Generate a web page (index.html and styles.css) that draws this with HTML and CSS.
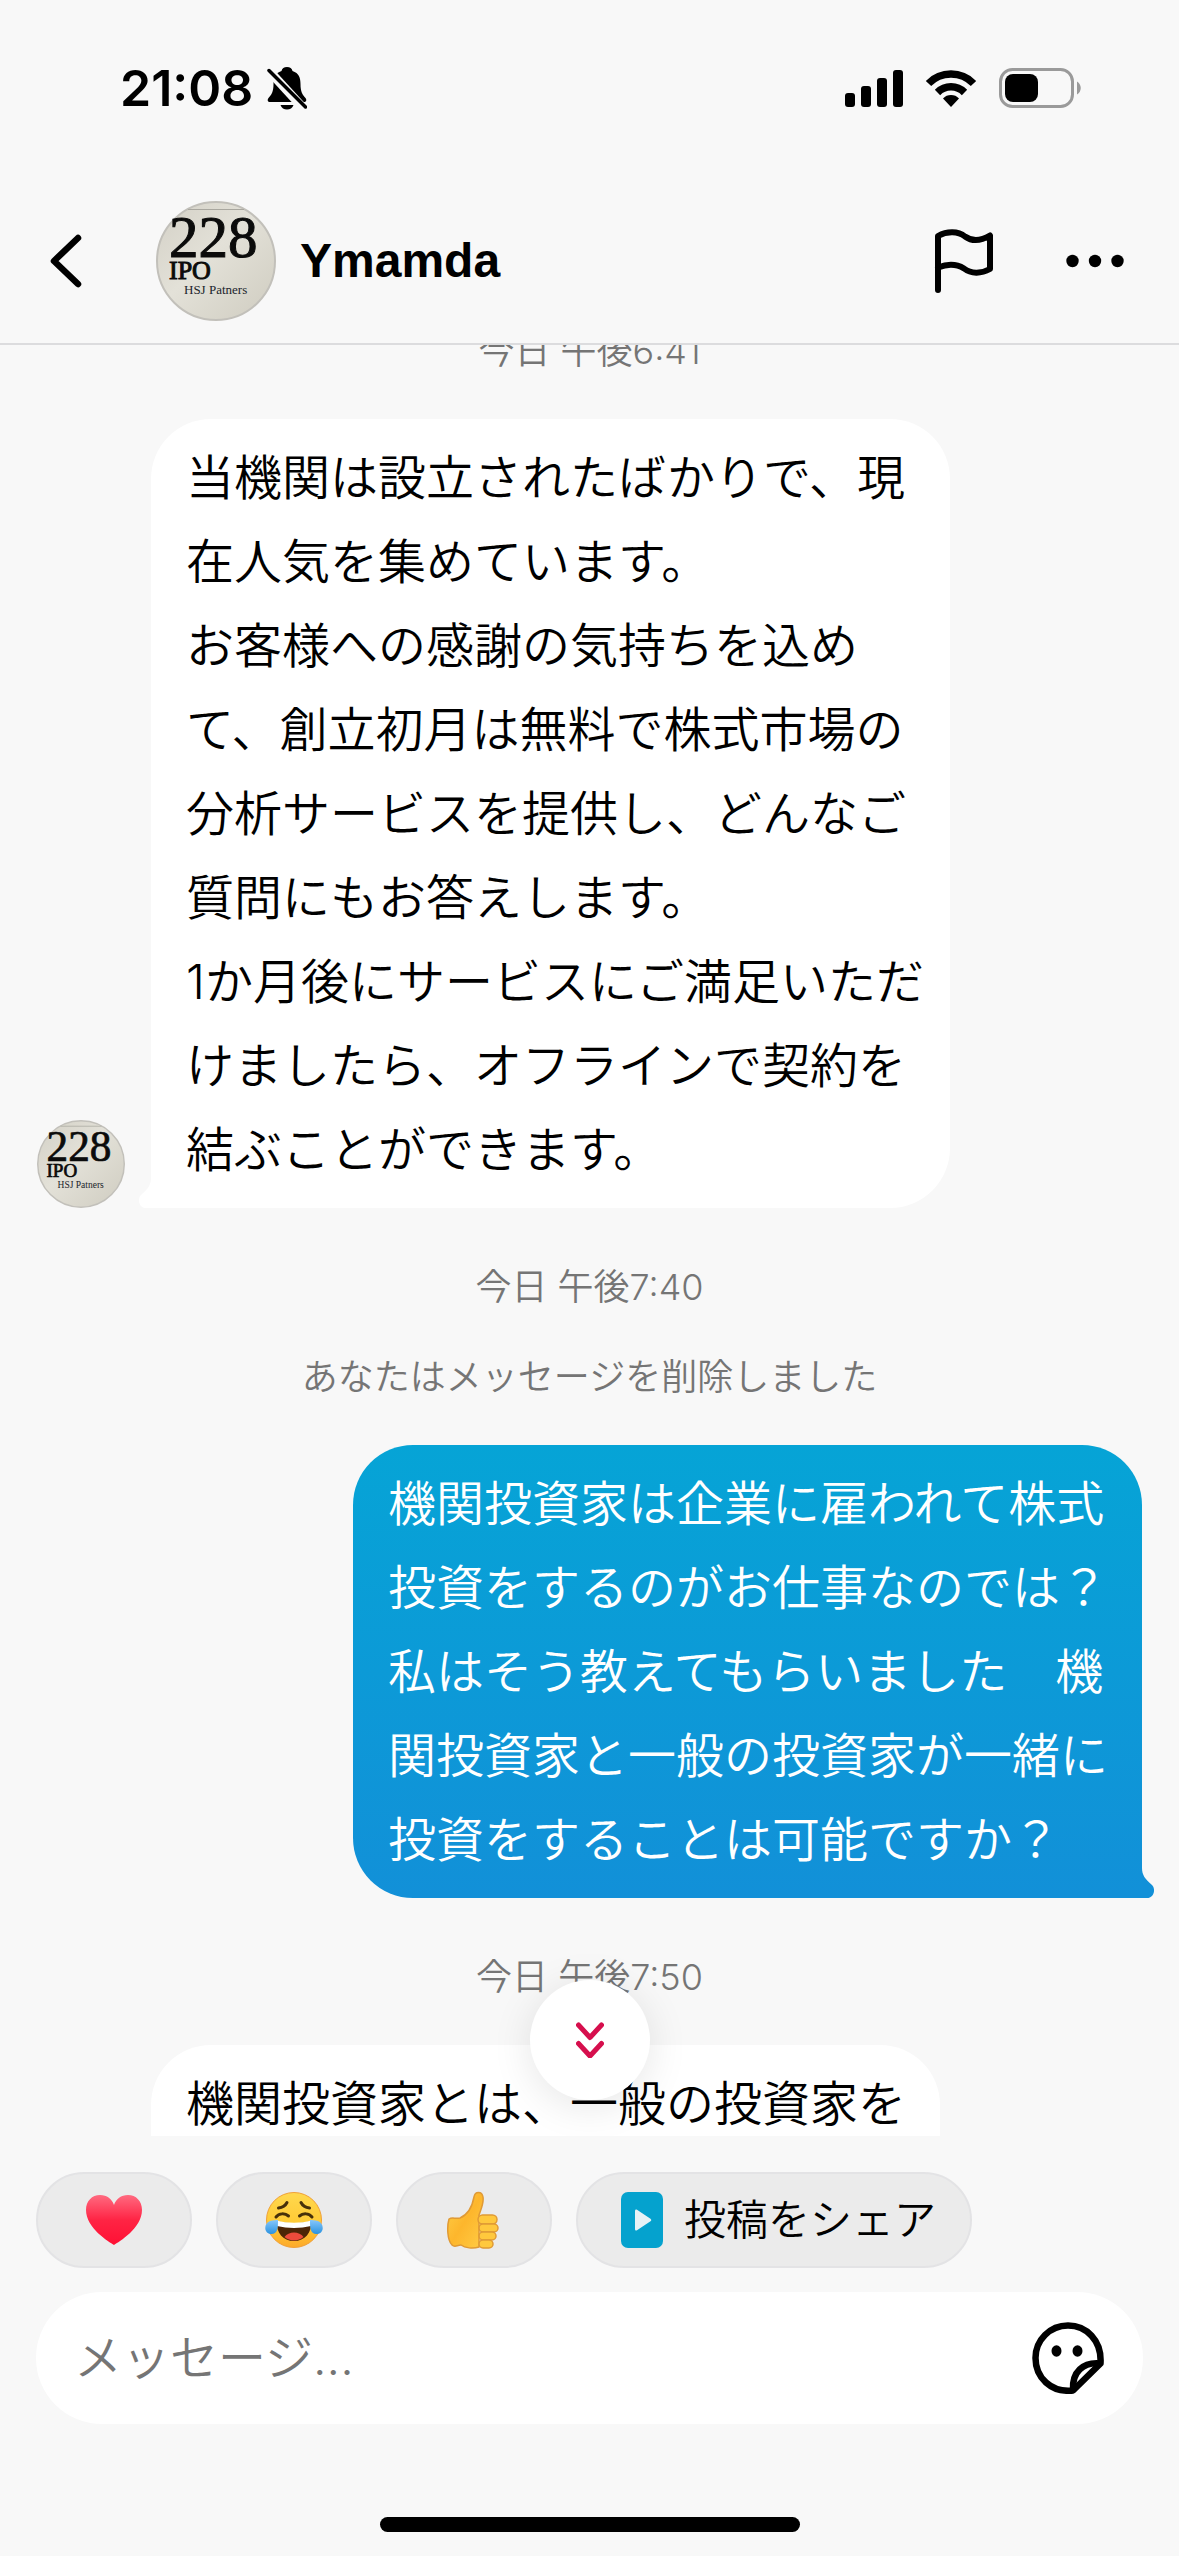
FILE: index.html
```html
<!DOCTYPE html>
<html lang="ja">
<head>
<meta charset="utf-8">
<meta name="viewport" content="width=device-width">
<title>Ymamda</title>
<link rel="stylesheet" href="styles.css">
</head>
<body>
<svg class="defs" aria-hidden="true">
  <defs>
    <linearGradient id="paper" x1="0" y1="0" x2="1" y2="1">
      <stop offset="0" stop-color="#d3d0c6"/><stop offset="0.45" stop-color="#e3e1d8"/><stop offset="1" stop-color="#cfccc0"/>
    </linearGradient>
    <symbol id="avatar" viewBox="0 0 120 120">
      <circle cx="60" cy="60" r="59" fill="url(#paper)" stroke="#c2c0ba" stroke-width="2"/>
      <path d="M32 8.500H88" stroke="#a9a79f"/>
      <g font-family="Liberation Serif, serif" fill="#0b0b0b">
        <text x="13" y="56" font-size="59" stroke="#0b0b0b">228</text>
        <text x="13" y="78" font-size="26" stroke="#0b0b0b">IPO</text>
        <text x="28" y="93" font-size="13" fill="#20242c">HSJ Patners</text>
      </g>
    </symbol>
  </defs>
</svg>
<div class="app">
  <div class="status">
    <div class="status-left">
      <span class="clock">21:08</span>
      <svg width="40" height="44" viewBox="0 0 40 44" aria-hidden="true">
        <path d="M20 1c-3 0-5 1.500-5.500 4C8 7 6.500 12 6.500 18c0 8-2 10.500-5 14-1.500 2-.8 4 1.500 4h34c2.300 0 3-2 1.500-4-3-3.500-5-6-5-14 0-6-1.500-11-8-13C25 2.500 23 1 20 1zM13.500 39h13c-1 3.300-3.500 4.500-6.500 4.500s-5.500-1.200-6.500-4.500z"/>
        <path d="M-1 1.500 39 45" stroke="#f8f8f8" stroke-width="9"/>
        <path d="M2 4.500 38.500 41" stroke="#000" stroke-width="3.500" stroke-linecap="round"/>
      </svg>
    </div>
    <div class="status-right">
      <svg width="58" height="38" viewBox="0 0 58 38" aria-hidden="true">
        <rect y="24" width="10" height="14" rx="3"/><rect x="16" y="17" width="10" height="21" rx="3"/><rect x="32" y="9" width="10" height="29" rx="3"/><rect x="48" y="1" width="10" height="37" rx="3"/>
      </svg>
      <svg width="52" height="38" viewBox="0 0 52 38" aria-hidden="true">
        <g fill="none" stroke="#000" stroke-width="7.500"><path d="M3.500 14.500a31.500 31.500 0 0 1 45 0"/><path d="M12.500 23.500a19 19 0 0 1 27 0"/></g>
        <path d="M26 38 18 29.500a11 11 0 0 1 16 0z"/>
      </svg>
      <svg width="83" height="40" viewBox="0 0 83 40" aria-hidden="true">
        <rect x="1.500" y="1.500" width="72" height="37" rx="12" fill="none" stroke="#9a9a9a" stroke-width="3"/>
        <rect x="6" y="6" width="33" height="28" rx="8"/>
        <path d="M78 13.500c5 3 5 10 0 13z" fill="#9a9a9a"/>
      </svg>
    </div>
  </div>

  <header class="header">
    <button class="icon-btn" type="button" aria-label="戻る">
      <svg width="32" height="54" viewBox="0 0 32 54"><path d="M28 4 4 27l24 23" fill="none" stroke="#000" stroke-width="6.500" stroke-linejoin="round" stroke-linecap="round"/></svg>
    </button>
    <svg class="avatar avatar-lg" role="img" aria-label="Ymamda"><use href="#avatar"/></svg>
    <h1 class="name">Ymamda</h1>
    <div class="actions">
      <button class="icon-btn" type="button" aria-label="報告">
        <svg width="60" height="64" viewBox="0 0 60 64"><path d="M4 61V7c9-5 20-5 27 0.500 7 5 15 5 25-1v33.500c-9 5-19 5-26-0.500-8-5-16-5-26-1" fill="none" stroke="#000" stroke-width="6" stroke-linecap="round" stroke-linejoin="round"/></svg>
      </button>
      <button class="icon-btn" type="button" aria-label="その他">
        <svg width="58" height="14" viewBox="0 0 58 14"><circle cx="6.500" cy="7" r="6.200"/><circle cx="29" cy="7" r="6.200"/><circle cx="51.500" cy="7" r="6.200"/></svg>
      </button>
    </div>
  </header>

  <main class="chat">
    <div class="messages">
      <p class="stamp">今日 午後6:41</p>
      <div class="row">
        <svg class="avatar avatar-sm" role="img" aria-label="Ymamda"><use href="#avatar"/></svg>
        <div class="bubble incoming wide">
          <p>当機関は設立されたばかりで、現<br>在人気を集めています。<br>お客様への感謝の気持ちを込め<br>て、創立初月は無料で株式市場の<br>分析サービスを提供し、どんなご<br>質問にもお答えします。<br>1か月後にサービスにご満足いただ<br>けましたら、オフラインで契約を<br>結ぶことができます。</p>
          <svg class="tail tail-left" width="12" height="30" viewBox="0 0 12 30" aria-hidden="true"><path d="M12 0c0 7-3 11-10 17-4 4-2 13 5 13h5z" fill="#fff"/></svg>
        </div>
      </div>
      <p class="stamp">今日 午後7:40</p>
      <p class="notice">あなたはメッセージを削除しました</p>
      <div class="row row-out">
        <div class="bubble outgoing">
          <p>機関投資家は企業に雇われて株式<br>投資をするのがお仕事なのでは？<br>私はそう教えてもらいました　機<br>関投資家と一般の投資家が一緒に<br>投資をすることは可能ですか？</p>
          <svg class="tail tail-right" width="12" height="30" viewBox="0 0 12 30" aria-hidden="true"><path d="M0 0c0 7 3 11 10 17 4 4 2 13-5 13H0z" fill="#1290d8"/></svg>
        </div>
      </div>
      <p class="stamp">今日 午後7:50</p>
      <div class="row row-next">
        <div class="bubble incoming continued">
          <p>機関投資家とは、一般の投資家を</p>
        </div>
      </div>
    </div>
    <button class="jump" type="button" aria-label="最新のメッセージへ">
      <svg width="28" height="36" viewBox="0 0 28 36"><path d="m2.500 3 11.500 12.500L25.500 3M2.500 21.500 14 34l11.500-12.500" fill="none" stroke="#d60f4d" stroke-width="5" stroke-linecap="round" stroke-linejoin="round"/></svg>
    </button>
  </main>

  <footer class="composer">
    <div class="quick">
      <button class="pill emoji" type="button" aria-label="ハート">
        <svg width="58" height="58" viewBox="0 0 58 58">
          <defs><linearGradient id="heart" x1="0" y1="0" x2="0" y2="1"><stop offset="0" stop-color="#ff6a80"/><stop offset="0.5" stop-color="#ff2444"/><stop offset="1" stop-color="#ff1034"/></linearGradient></defs>
          <path d="M29 54C24 51 1 37 1 19 1 10 7 4 15 4c7 0 12 4 14 10C31 8 36 4 43 4c8 0 14 6 14 15 0 18-23 32-28 35z" fill="url(#heart)"/>
        </svg>
      </button>
      <button class="pill emoji" type="button" aria-label="うれし泣き">
        <svg width="58" height="58" viewBox="0 0 58 58">
          <defs>
            <linearGradient id="face" x1="0" y1="0" x2="0" y2="1"><stop offset="0" stop-color="#ffd84e"/><stop offset="0.6" stop-color="#ffc933"/><stop offset="1" stop-color="#fda92a"/></linearGradient>
            <linearGradient id="tear" x1="0" y1="0" x2="0" y2="1"><stop offset="0" stop-color="#86c6fb"/><stop offset="1" stop-color="#2b93e0"/></linearGradient>
          </defs>
          <circle cx="29" cy="29" r="27.500" fill="url(#face)" stroke="#f0a038"/>
          <g fill="none" stroke="#47300a" stroke-width="3" stroke-linecap="round"><path d="M13.500 17c4-.5 7-2.500 8.500-5.500M44.500 17c-4-.5-7-2.500-8.500-5.500"/><path d="M11 26c3-4 9-4 12.500-1M47 26c-3-4-9-4-12.500-1"/></g>
          <path d="M12 30c10 3 24 3 34 0 1 12-6 20-17 20s-18-8-17-20z" fill="#4d2506"/>
          <path d="M12 29.500c10 3 24 3 34 0v5.500c-11 2.500-23 2.500-34 0z" fill="#fff"/>
          <path d="M19.500 46c4-6 15-6 19 0-5 4.500-14 4.500-19 0z" fill="#ec4b3b"/>
          <path d="M13 29c0 7 0 14-6.500 14C-1 43-2 33 5 30c3-1 6-1 8-1zM45 29c0 7 0 14 6.500 14C59 43 60 33 53 30c-3-1-6-1-8-1z" fill="url(#tear)"/>
        </svg>
      </button>
      <button class="pill emoji" type="button" aria-label="いいね">
        <svg width="58" height="58" viewBox="0 0 58 58">
          <defs><linearGradient id="hand" x1="0" y1="0" x2="1" y2="1"><stop offset="0" stop-color="#ffd24a"/><stop offset="0.5" stop-color="#fdb62c"/><stop offset="1" stop-color="#ffcc45"/></linearGradient></defs>
          <g stroke="#e09a35" stroke-width="1.500" stroke-linejoin="round">
            <path d="M4 28c3-2 6 0 11-1 7-3 12-10 14-21 1-6 8-6 9 0 1 6-2 12-4 18v32c-6 2-14 1-18-2-4 0-6 3-9 0C2 49 2 35 4 28z" fill="url(#hand)"/>
            <g fill="#ffc83d"><rect x="33" y="24" width="19" height="9" rx="4.500"/><rect x="34" y="33" width="19" height="8" rx="4"/><rect x="34" y="41" width="17" height="8" rx="4"/><rect x="34" y="49" width="14" height="8" rx="4"/></g>
          </g>
        </svg>
      </button>
      <button class="pill share" type="button">
        <svg width="44" height="58" viewBox="0 0 44 58" aria-hidden="true"><rect x="1" y="1" width="42" height="56" rx="7" fill="#05a2ce"/><path d="M15 20v18c0 1.500 1 2 2 1.300l13.500-9c1-.8 1-1.800 0-2.600L17 18.700c-1-.7-2-.2-2 1.300z" fill="#e6f2f6"/></svg>
        <span>投稿をシェア</span>
      </button>
    </div>
    <div class="field">
      <input class="input" type="text" placeholder="メッセージ..." aria-label="メッセージ">
      <button class="icon-btn" type="button" aria-label="ステッカー">
        <svg width="72" height="72" viewBox="0 0 72 72"><path d="M41 68.500C19 71 3.500 55.500 3.500 36 3.500 18 18 3.500 36 3.500S70 18 68.500 41.500z" fill="none" stroke="#000" stroke-width="6.500" stroke-linejoin="round"/><path d="M68 41.500C51 40 40 50 41 68" fill="none" stroke="#000" stroke-width="6.500" stroke-linejoin="round"/><ellipse cx="24.500" cy="29" rx="5" ry="5.800"/><ellipse cx="45.500" cy="29" rx="5" ry="5.800"/></svg>
      </button>
    </div>
    <div class="home"></div>
  </footer>
</div>
</body>
</html>
```

FILE: styles.css
```css
* {
  box-sizing: border-box;
}

body {
  margin: 0;
  background: #f8f8f8;
  color: #000;
  font-family: Inter, "Noto Sans CJK JP", sans-serif;
}

p,
h1 {
  margin: 0;
}

button {
  margin: 0;
  padding: 0;
  border: 0;
  background: none;
  color: inherit;
  font: inherit;
  cursor: pointer;
}

svg {
  display: block;
  flex: none;
}

.defs {
  position: absolute;
  width: 0;
  height: 0;
}

.app {
  display: flex;
  flex-direction: column;
  height: 100vh;
  overflow: hidden;
}

/* Status bar */
.status {
  display: flex;
  flex: none;
  align-items: center;
  justify-content: space-between;
  height: 176px;
  padding: 0 97px 0 120px;
}

.status-left,
.status-right {
  display: flex;
  align-items: center;
}

.status-left {
  gap: 14px;
}

.status-right {
  gap: 22px;
}

.clock {
  font-size: 50px;
  font-weight: 600;
  line-height: 60px;
}

/* Conversation header */
.header {
  display: flex;
  flex: none;
  align-items: center;
  height: 169px;
  padding: 2px 55px 0 50px;
  border-bottom: 2px solid #dcdcde;
}

.icon-btn {
  flex: none;
}

.avatar-lg {
  width: 120px;
  height: 120px;
  margin: 0 24px 0 74px;
}

.avatar-sm {
  width: 88px;
  height: 88px;
}

.name {
  flex: 1;
  font-family: "Liberation Sans", sans-serif;
  font-size: 48px;
  font-weight: 700;
  line-height: 60px;
}

.actions {
  display: flex;
  align-items: center;
  gap: 72px;
}

/* Messages */
.chat {
  position: relative;
  flex: 1;
  min-height: 0;
  overflow: hidden;
}

.messages {
  margin-top: -73px;
  padding: 0 37px;
  font-weight: 350;
}

.stamp,
.notice {
  color: #757575;
  font-size: 36px;
  line-height: 44px;
  text-align: center;
}

.stamp {
  padding: 57px 0 46px;
}

.notice {
  padding-bottom: 46px;
}

.row {
  display: flex;
  align-items: flex-end;
  gap: 26px;
}

.row-out {
  justify-content: flex-end;
}

.row-next {
  padding-left: 114px;
}

.bubble {
  position: relative;
  width: 789px;
  padding: 17px 20px 16px 35px;
  border-radius: 60px;
  font-size: 48px;
  line-height: 84px;
  white-space: nowrap;
}

.wide {
  width: 799px;
}

.incoming {
  background: #fff;
  border-bottom-left-radius: 0;
}

.outgoing {
  background: linear-gradient(#06a4d6, #1290d8);
  color: #fff;
  border-bottom-right-radius: 0;
}

.continued {
  border-bottom-right-radius: 0;
}

.tail {
  position: absolute;
  bottom: 0;
}

.tail-left {
  right: 100%;
}

.tail-right {
  left: 100%;
}

.jump {
  position: absolute;
  bottom: 36px;
  left: 50%;
  display: grid;
  place-items: center;
  width: 120px;
  height: 120px;
  margin-left: -60px;
  border-radius: 50%;
  background: #fff;
  box-shadow: 0 6px 40px rgba(0, 0, 0, 0.1);
}

/* Composer */
.composer {
  flex: none;
  padding: 36px 36px 24px;
  font-weight: 350;
}

.quick {
  display: flex;
  gap: 24px;
  margin-bottom: 24px;
}

.pill {
  display: flex;
  align-items: center;
  justify-content: center;
  height: 96px;
  border: 2px solid #e3e3e5;
  border-radius: 48px;
  background: #ebebeb;
}

.emoji {
  width: 156px;
}

.share {
  justify-content: flex-start;
  gap: 20px;
  width: 396px;
  padding-left: 42px;
  font-size: 42px;
  line-height: 60px;
}

.field {
  display: flex;
  align-items: center;
  height: 132px;
  padding: 0 39px 0 38px;
  border-radius: 66px;
  background: #fff;
}

.input {
  flex: 1;
  min-width: 0;
  padding: 0;
  border: 0;
  outline: 0;
  background: none;
  color: #000;
  font: inherit;
  font-size: 48px;
  line-height: 72px;
}

.input::placeholder {
  color: #757575;
  opacity: 1;
}

.home {
  width: 420px;
  height: 15px;
  margin: 93px auto 0;
  border-radius: 8px;
  background: #000;
}
```
